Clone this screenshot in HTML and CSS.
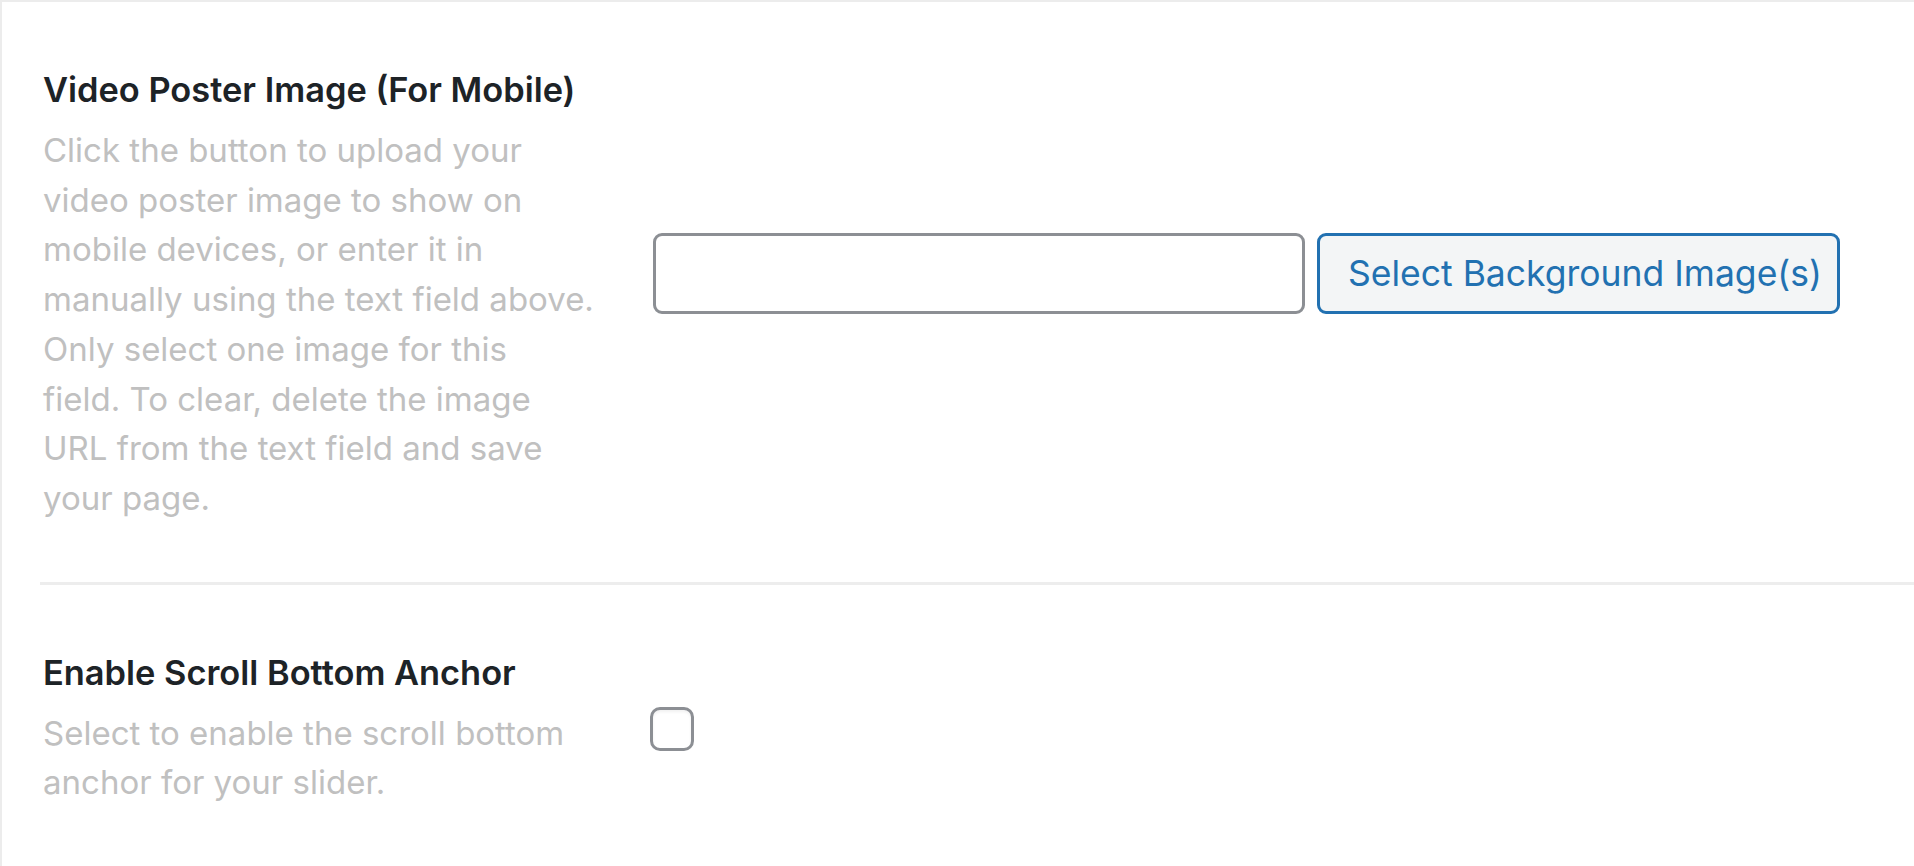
FILE: index.html
```html
<!DOCTYPE html>
<html lang="en">
<head>
<meta charset="utf-8">
<title>Slider settings</title>
<link rel="stylesheet" href="styles.css">
</head>
<body>
<div class="panel">
  <div class="row">
    <div class="label">
      <h3 class="title">Video Poster Image (For Mobile)</h3>
      <p class="desc">Click the button to upload your video poster image to show on mobile devices, or enter it in manually using the text field above. Only select one image for this<br>field. To clear, delete the image URL from the text field and save your page.</p>
    </div>
    <div class="field field-upload">
      <input class="text-input" type="text" value="">
      <button class="btn" type="button">Select Background Image(s)</button>
    </div>
  </div>
  <div class="divider"></div>
  <div class="row">
    <div class="label">
      <h3 class="title">Enable Scroll Bottom Anchor</h3>
      <p class="desc">Select to enable the scroll bottom anchor for your slider.</p>
    </div>
    <div class="field field-check">
      <span class="checkbox"></span>
    </div>
  </div>
</div>
</body>
</html>
```
FILE: styles.css
```css
html, body {
  margin: 0;
  padding: 0;
  background: #ffffff;
}
body {
  font-family: Inter, "Liberation Sans", Arial, sans-serif;
  color: #1d2327;
  height: 866px;
  overflow: hidden;
}
.panel {
  border-top: 2px solid #ececec;
  border-left: 2px solid #ececec;
  min-height: 866px;
  box-sizing: border-box;
}
.row {
  display: grid;
  grid-template-columns: 560px 1fr;
  column-gap: 50px;
  padding: 68px 0 58px 41px;
}
.title {
  margin: 0;
  font-size: 34.4px;
  line-height: 40px;
  font-weight: 600;
  color: #1d2327;
}
.desc {
  margin: 16px 0 0;
  font-size: 33px;
  line-height: 49.7px;
  color: #c0c0c0;
}
.field {
  display: flex;
  align-items: flex-start;
  gap: 12px;
}
.field-upload {
  padding-top: 163px;
}
.field-check {
  padding-top: 54px;
}
.text-input {
  width: 652px;
  height: 81px;
  box-sizing: border-box;
  border: 3px solid #8c8f94;
  border-radius: 9px;
  background: #fff;
  margin: 0;
  padding: 0 16px;
  font: inherit;
}
.btn {
  height: 81px;
  width: 523px;
  box-sizing: border-box;
  border: 3px solid #2271b1;
  border-radius: 9px;
  background: #f3f5f6;
  color: #2271b1;
  font-family: inherit;
  font-size: 35.5px;
  text-align: left;
  padding: 0 10px 0 28px;
  margin: 0;
}
.divider {
  height: 3px;
  background: #ededed;
  margin-left: 38px;
}
.checkbox {
  display: block;
  width: 44px;
  height: 44px;
  margin-left: -3px;
  box-sizing: border-box;
  border: 3px solid #8c8f94;
  border-radius: 10px;
  background: #fff;
  box-shadow: inset 0 2px 3px rgba(0,0,0,0.06);
}
```
